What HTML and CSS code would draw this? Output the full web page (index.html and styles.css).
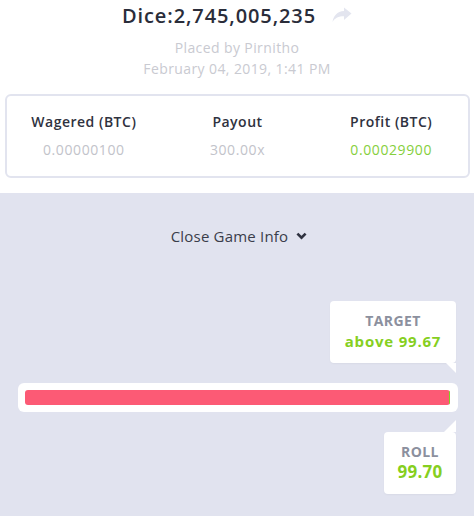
FILE: index.html
```html
<!DOCTYPE html>
<html>
<head>
<meta charset="utf-8">
<link rel="stylesheet" href="styles.css">
</head>
<body>
<div class="page">
  <header class="head">
    <div class="title-row">
      <h1 class="title">Dice:2,745,005,235</h1>
      <svg class="share" width="20" height="16" viewBox="0 0 20 16"><path d="M19.5 6.5 L12 0.5 V4 C5 4.5 1.5 9 0.5 15 C3 11 6.5 9.3 12 9.3 V13 Z" fill="#e3e5ef"/></svg>
    </div>
    <div class="meta first">Placed by Pirnitho</div>
    <div class="meta">February 04, 2019, 1:41 PM</div>
  </header>
  <section class="card">
    <div class="col"><div class="label">Wagered (BTC)</div><div class="val">0.00000100</div></div>
    <div class="col"><div class="label">Payout</div><div class="val">300.00x</div></div>
    <div class="col"><div class="label">Profit (BTC)</div><div class="val green">0.00029900</div></div>
  </section>
  <section class="info">
    <div class="toggle">Close Game Info <svg class="chev" width="11" height="8" viewBox="0 0 11 8"><path d="M1.4 1.6 L5.5 5.7 L9.6 1.6" stroke="#2f3240" stroke-width="2.6" fill="none"/></svg></div>
    <div class="slider">
      <div class="tip tip-target">
        <div class="tip-label">TARGET</div>
        <div class="tip-val">above 99.67</div>
      </div>
      <div class="track"><div class="bar"><span class="win"></span></div></div>
      <div class="tip tip-roll">
        <div class="tip-label">ROLL</div>
        <div class="tip-val big">99.70</div>
      </div>
    </div>
  </section>
</div>
</body>
</html>
```
FILE: styles.css
```css
* { box-sizing: border-box; margin: 0; padding: 0; }
html, body { background: #fff; }
body { font-family: "Open Sans", "Liberation Sans", sans-serif; width: 474px; height: 525px; overflow: hidden; }
.page { display: flex; flex-direction: column; height: 525px; }
.head { display: flex; flex-direction: column; align-items: center; height: 88px; }
.title-row { display: flex; align-items: center; gap: 16px; margin-left: 0; height: 30px; }
.title { font-size: 20px; font-weight: 600; color: #2a2d3a; letter-spacing: 0.9px; }
.meta { font-size: 14px; color: #c9cad1; line-height: 21px; letter-spacing: 0.4px; }
.meta.first { margin-top: 7px; }
.card { margin: 6px 4px 0 5px; height: 84px; border: 2px solid #e2e4ef; border-radius: 6px; display: grid; grid-template-columns: 1fr 1fr 1fr; padding-top: 16px; }
.col { display: flex; flex-direction: column; align-items: center; }
.label { font-size: 14px; font-weight: 600; color: #2f3240; line-height: 20px; letter-spacing: 0.5px; }
.val { font-size: 14px; color: #c2c3ca; line-height: 20px; margin-top: 8px; letter-spacing: 0.6px; }
.val.green { color: #86cf3c; }
.info { margin-top: 15px; background: #e1e3ef; height: 323px; display: flex; flex-direction: column; }
.toggle { align-self: center; margin-top: 33px; font-size: 15px; color: #3a3d4a; display: flex; align-items: center; gap: 8px; margin-left: 4px; letter-spacing: 0.2px; }
.slider { display: flex; flex-direction: column; margin-top: 55px; padding: 0 16px 0 18px; }
.tip { background: #fff; border-radius: 4px; display: flex; flex-direction: column; align-items: center; position: relative; box-shadow: 0 1px 2px rgba(0,0,0,0.04); margin-right: 2px; }
.tip-target { align-self: flex-end; width: 126px; height: 62px; padding-top: 11px; }
.tip-target::after { content: ""; position: absolute; right: 0; bottom: -10px; border-style: solid; border-width: 0 10px 10px 0; border-color: transparent #fff transparent transparent; }
.tip-roll { align-self: flex-end; width: 72px; height: 62px; margin-top: 20px; padding-top: 11px; }
.tip-roll::before { content: ""; position: absolute; right: 0; top: -12px; border-style: solid; border-width: 12px 0 0 12px; border-color: transparent transparent transparent #fff; transform: scaleX(-1); }
.tip-label { font-size: 14px; font-weight: 700; color: #8c909e; line-height: 18px; letter-spacing: 0.4px; }
.tip-val { font-size: 15px; font-weight: 700; color: #86cf1f; line-height: 22px; letter-spacing: 0.8px; }
.tip-val.big { font-size: 17px; letter-spacing: 0.3px; }
.track { margin-top: 20px; background: #fff; border-radius: 6px; height: 29px; padding: 7px 8px 7px 7px; }
.bar { height: 15px; background: #fc5a75; border-radius: 3px; position: relative; overflow: hidden; }
.win { position: absolute; right: 0; top: 0; bottom: 0; width: 1.5px; background: #7ed321; }
```
